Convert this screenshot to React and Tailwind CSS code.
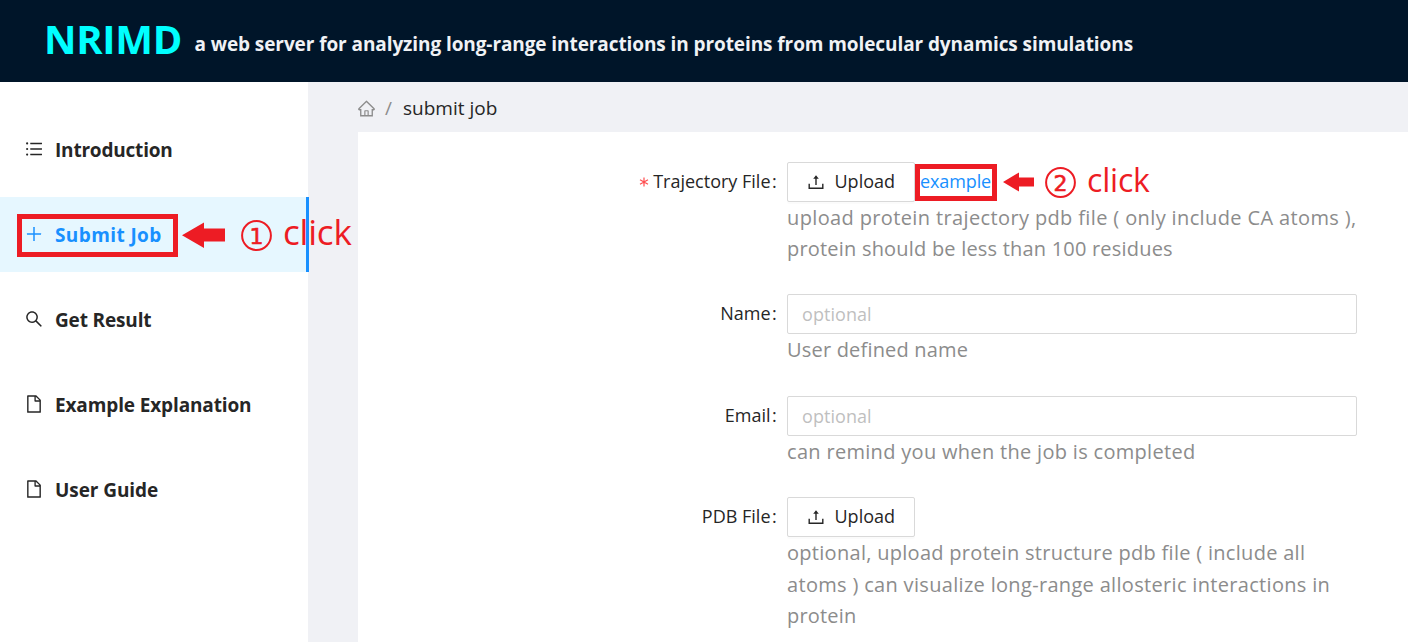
import React from "react";
import {
  AiOutlineUnorderedList,
  AiOutlinePlus,
  AiOutlineSearch,
  AiOutlineFile,
  AiOutlineHome,
} from "react-icons/ai";

const menu = [
  { icon: AiOutlineUnorderedList, label: "Introduction", tracking: "tracking-[-0.2px]" },
  { icon: AiOutlinePlus, label: "Submit Job", active: true, tracking: "tracking-[0.4px]" },
  { icon: AiOutlineSearch, label: "Get Result", tracking: "tracking-[-0.15px]" },
  { icon: AiOutlineFile, label: "Example Explanation", tracking: "tracking-[-0.13px]" },
  { icon: AiOutlineFile, label: "User Guide", tracking: "tracking-[-0.07px]" },
];

function UploadIcon() {
  return (
    <svg width="16" height="16" viewBox="0 0 16 16" fill="none" stroke="currentColor" strokeWidth="1.4" className="shrink-0">
      <path d="M1.2 9.8V14.3H14.8V9.8" />
      <path d="M8 11V3" />
      <path d="M5.2 4.8L8 1.2L10.8 4.8Z" fill="currentColor" stroke="none" />
    </svg>
  );
}

function UploadButton() {
  return (
    <button className="flex h-10 w-32 items-center rounded-[2px] border border-[#d9d9d9] bg-white pl-[19.5px] shadow-[0_2px_0_rgba(0,0,0,0.016)]">
      <UploadIcon />
      <span className="ml-[11px] pb-[2px] text-[18px] leading-none">Upload</span>
    </button>
  );
}

function Row({ label, required, children, help, className = "", leading = "leading-[31.5px]" }) {
  return (
    <div className={"flex items-start " + className}>
      <div className="flex h-10 w-[429px] shrink-0 items-center justify-end pr-[10px] pb-[2px] text-[18px] leading-none">
        {required && (
          <svg width="10" height="10" viewBox="0 0 10 10" stroke="#ff4d4f" strokeWidth="1.2" className="mt-[2px] mr-[4px]">
            <path d="M5 0.5V9.5M1 2.8L9 7.2M9 2.8L1 7.2" />
          </svg>
        )}
        <span>{label}</span>
        <span className="ml-[1.5px] w-[5px]">:</span>
      </div>
      <div className="w-[570px] shrink-0">
        {children}
        <div className={"text-[20px] text-[#8c8c8c] " + leading}>
          {help.map(([text, tracking]) => (
            <div key={text} className={"whitespace-nowrap " + tracking}>{text}</div>
          ))}
        </div>
      </div>
    </div>
  );
}

function Field() {
  return (
    <input
      placeholder="optional"
      className="block h-10 w-full rounded-[2px] border border-[#d9d9d9] px-[14px] pb-px text-[18px] tracking-[0.05px] outline-none placeholder:text-[#bfbfbf]"
    />
  );
}

function Click({ number, className }) {
  return (
    <div className="flex items-center text-[#ed1c24]">
      <svg width="32" height="32" viewBox="0 0 32 32" fill="none" stroke="currentColor" strokeWidth="2" className="shrink-0">
        <circle cx="15.5" cy="16.5" r="14.4" />
        <text x="15.5" y="24.5" textAnchor="middle" fontSize="22" fill="currentColor" stroke="currentColor" strokeWidth="0.6" fontFamily="DejaVu Sans, sans-serif">{number}</text>
      </svg>
      <span className={"ml-[10px] leading-none " + className}>click</span>
    </div>
  );
}

export default function App() {
  return (
    <div className="relative flex h-[642px] w-[1408px] flex-col overflow-hidden bg-[#f0f1f5] font-['Open_Sans',sans-serif] text-[#262626]">
      <header className="flex h-[82px] shrink-0 items-start bg-[#001529] pl-[44px] font-bold">
        <h1 className="text-[40px] leading-[78px] tracking-[-0.3px] text-[#00ffff]">NRIMD</h1>
        <p className="ml-[12.5px] text-[19px] leading-[88px] whitespace-nowrap tracking-[-0.085px] text-[#f0f2f5]">
          a web server for analyzing long-range interactions in proteins from molecular dynamics simulations
        </p>
      </header>
      <div className="flex min-h-0 flex-1">
        <nav className="flex w-[308px] shrink-0 flex-col gap-[10px] bg-white pt-[30px]">
          {menu.map(({ icon: Icon, label, active, tracking }) => (
            <a
              key={label}
              className={
                "flex h-[75px] shrink-0 items-center pl-6 text-[19px] font-bold " +
                (active ? "w-[309px] border-r-3 border-[#1890ff] bg-[#e6f7ff] text-[#1890ff]" : "")
              }
            >
              <Icon className="mb-[2px] size-5 shrink-0" />
              <span className={"ml-[11px] pt-[2px] whitespace-nowrap " + tracking}>{label}</span>
            </a>
          ))}
        </nav>
        <main className="flex flex-1 flex-col pl-[50px]">
          <div className="flex h-[50px] shrink-0 items-center pt-[2px] text-[19px] leading-none">
            <AiOutlineHome className="-ml-px size-[19px] text-[#8c8c8c]" />
            <span className="ml-[9px] w-[9px] text-[#8c8c8c]">/</span>
            <span className="ml-[9px]">submit job</span>
          </div>
          <div className="flex flex-1 flex-col bg-white pt-[30px]">
            <Row
              label="Trajectory File"
              required
              leading="leading-[31px]"
              help={[
                ["upload protein trajectory pdb file ( only include CA atoms ),", "tracking-[0.37px]"],
                ["protein should be less than 100 residues", "tracking-[0.2px]"],
              ]}
            >
              <div className="flex items-center">
                <UploadButton />
                <a className="mt-px flex h-[37px] w-[82px] items-center justify-center border-5 border-[#ed1c24] pr-px pb-[3px] text-[18px] leading-none tracking-[-0.1px] text-[#1890ff]">example</a>
                <svg width="31" height="20" viewBox="0 0 31 20" className="ml-[6px]" fill="#ed1c24">
                  <path d="M0 10L16 0.5V5.5H31V14.5H16V19.5Z" />
                </svg>
                <div className="ml-[11px]"><Click number="2" className="-mt-[4px] text-[32px] tracking-[-0.2px]" /></div>
              </div>
            </Row>
            <Row className="mt-[30px]" label="Name" help={[["User defined name", "tracking-[0.19px]"]]}><Field /></Row>
            <Row className="mt-[30.5px]" label="Email" help={[["can remind you when the job is completed", "tracking-[0.31px]"]]}><Field /></Row>
            <Row
              className="mt-[29.5px]"
              label="PDB File"
              help={[
                ["optional, upload protein structure pdb file ( include all", "tracking-[0.29px]"],
                ["atoms ) can visualize long-range allosteric interactions in", "tracking-[0.32px]"],
                ["protein", "tracking-[0.2px]"],
              ]}
            >
              <UploadButton />
            </Row>
          </div>
        </main>
      </div>
      <div className="absolute top-[214px] left-[17px] h-[43px] w-[161px] border-5 border-[#ed1c24]" />
      <div className="absolute top-[219px] left-[182px] flex items-center">
        <svg width="43" height="27" viewBox="0 0 43 27" className="mt-px" fill="#ed1c24">
          <path d="M0 13.2L22 0.5V6.5H43V19.5H22V26Z" />
        </svg>
        <div className="ml-[16px]"><Click number="1" className="-mt-[7px] text-[35px] tracking-[-0.2px]" /></div>
      </div>
    </div>
  );
}
